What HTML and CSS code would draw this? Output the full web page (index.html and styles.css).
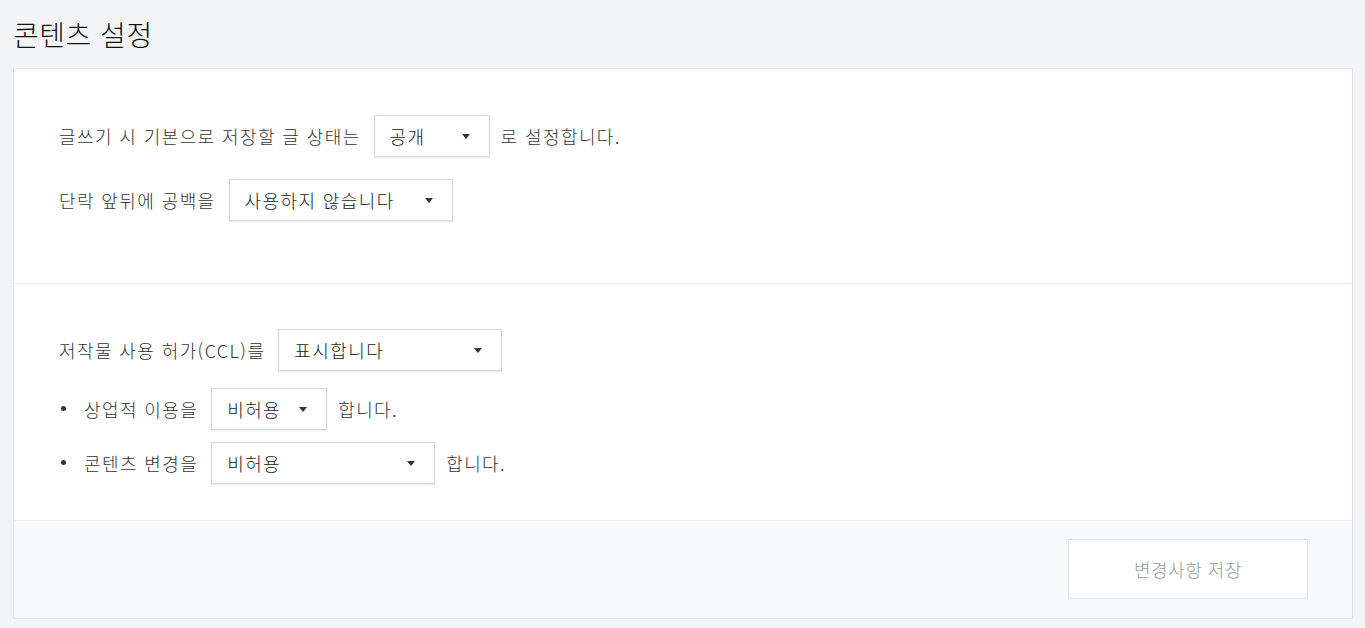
FILE: index.html
```html
<!DOCTYPE html>
<html lang="ko">
<head>
<meta charset="utf-8">
<link rel="stylesheet" href="styles.css">
</head>
<body>
<h1 class="page-title">콘텐츠 설정</h1>
<div class="card">
  <section class="section section-first">
    <div class="row">
      <span class="label">글쓰기 시 기본으로 저장할 글 상태는</span>
      <div class="select w-sm"><span>공개</span><i class="arrow"></i></div>
      <span class="label">로 설정합니다.</span>
    </div>
    <div class="row row-gap">
      <span class="label">단락 앞뒤에 공백을</span>
      <div class="select w-lg"><span>사용하지 않습니다</span><i class="arrow"></i></div>
    </div>
  </section>
  <section class="section section-second">
    <div class="row">
      <span class="label">저작물 사용 허가(CCL)를</span>
      <div class="select w-lg"><span>표시합니다</span><i class="arrow"></i></div>
    </div>
    <ul class="bullets">
      <li class="row bullet">
        <span class="label">상업적 이용을</span>
        <div class="select w-sm"><span>비허용</span><i class="arrow"></i></div>
        <span class="label">합니다.</span>
      </li>
      <li class="row bullet bullet-second">
        <span class="label">콘텐츠 변경을</span>
        <div class="select w-lg"><span>비허용</span><i class="arrow"></i></div>
        <span class="label">합니다.</span>
      </li>
    </ul>
  </section>
  <footer class="footer">
    <button class="save-btn" type="button">변경사항 저장</button>
  </footer>
</div>
</body>
</html>
```
FILE: styles.css
```css
* { box-sizing: border-box; }
html, body {
  margin: 0;
  padding: 0;
  background: #f3f4f6;
  font-family: "Noto Sans CJK KR", "Noto Sans", sans-serif;
  color: #222;
}
body {
  padding: 0 12px 0 13px;
  height: 628px;
  overflow: hidden;
}
.page-title {
  margin: 0;
  padding-top: 14px;
  height: 68px;
  font-size: 28px;
  font-weight: 300;
  line-height: 40px;
  letter-spacing: 0.5px;
  color: #111;
}
.card {
  background: #fff;
  border: 1px solid #dfe4ec;
}
.section {
  padding-left: 45px;
  border-bottom: 1px solid #eceef2;
}
.section-first {
  padding-top: 46px;
  padding-bottom: 62px;
}
.section-second {
  padding-top: 45px;
  padding-bottom: 36px;
}
.row {
  display: flex;
  align-items: center;
  height: 42px;
  font-size: 18px;
  font-weight: 300;
  letter-spacing: 1.4px;
  color: #333;
}
.row-gap { margin-top: 22px; }
.label { white-space: nowrap; }
.select {
  display: flex;
  align-items: center;
  justify-content: space-between;
  height: 42px;
  padding: 0 19px 0 15px;
  margin: 0 11px 0 13px;
  border: 1px solid #d3d8df;
  box-shadow: 0 1px 1px rgba(0,0,0,0.08);
  background: #fff;
  color: #222;
}
.w-sm { width: 116px; }
.w-lg { width: 224px; }
.arrow {
  width: 0;
  height: 0;
  border-left: 4px solid transparent;
  border-right: 4px solid transparent;
  border-top: 5px solid #333;
}
.bullets {
  list-style: none;
  margin: 17px 0 0;
  padding: 0;
}
.bullet {
  position: relative;
  padding-left: 25px;
}
.bullet::before {
  content: "";
  position: absolute;
  left: 2px;
  top: 18px;
  width: 5px;
  height: 5px;
  border-radius: 50%;
  background: #333;
}
.bullet-second { margin-top: 12px; }
.footer {
  display: flex;
  justify-content: flex-end;
  background: #f8f9fb;
  padding: 18px 44px 19px 0;
}
.save-btn {
  width: 240px;
  height: 60px;
  background: #fff;
  border: 1px solid #dfe3ea;
  font-family: inherit;
  font-size: 18px;
  font-weight: 300;
  letter-spacing: 0.5px;
  color: #999;
}
```
